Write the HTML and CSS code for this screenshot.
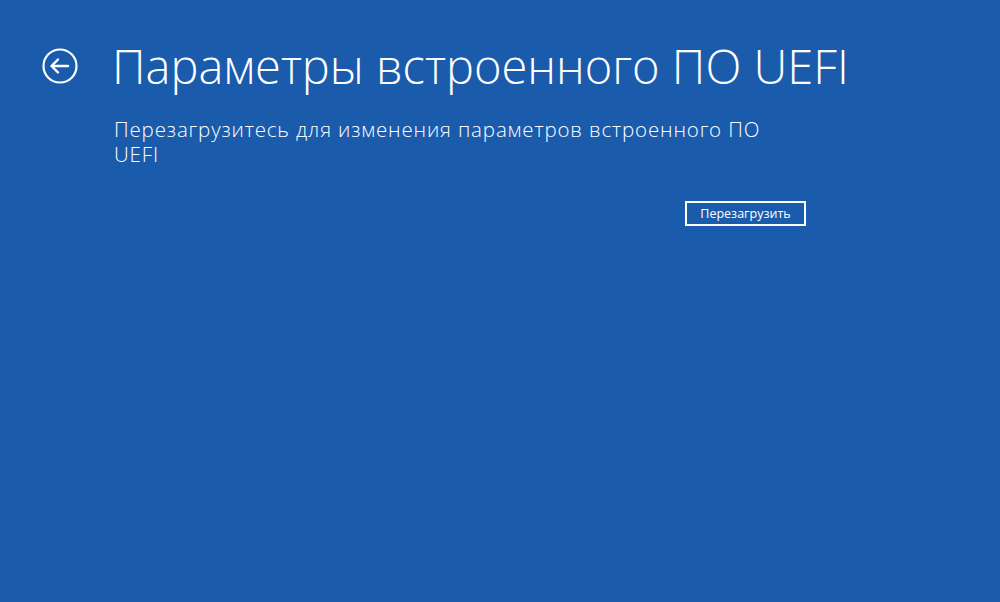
FILE: index.html
```html
<!DOCTYPE html>
<html lang="ru">
<head>
<meta charset="utf-8">
<link rel="stylesheet" href="styles.css">
</head>
<body>
<div class="page">
  <header class="head">
    <svg class="back" width="38" height="38" viewBox="0 0 38 38">
      <circle cx="19" cy="19" r="16.5" fill="none" stroke="#fff" stroke-width="2.2"/>
      <path d="M10.5 19 H27 M17 12.5 L10.5 19 L17 25.5" fill="none" stroke="#fff" stroke-width="2.4" stroke-linecap="round" stroke-linejoin="round"/>
    </svg>
    <h1 class="title">Параметры встроенного ПО UEFI</h1>
  </header>
  <main class="content">
    <p class="desc">Перезагрузитесь для изменения параметров встроенного ПО UEFI</p>
    <div class="actions">
      <button class="btn">Перезагрузить</button>
    </div>
  </main>
</div>
</body>
</html>
```
FILE: styles.css
```css
html, body {
  margin: 0;
  padding: 0;
  background: #1b5bac;
  width: 1000px;
  height: 602px;
  overflow: hidden;
  font-family: "Open Sans", "Noto Sans", sans-serif;
  color: #fff;
}
.head {
  display: flex;
  align-items: center;
  padding-top: 36px;
  padding-left: 41px;
  height: 60px;
}
.back {
  display: block;
  flex: none;
  margin-right: 33px;
}
.title {
  margin: 0;
  font-weight: 300;
  font-size: 47px;
  line-height: 60px;
  white-space: nowrap;
}
.content {
  padding-left: 114px;
  width: 692px;
  padding-top: 21px;
}
.desc {
  margin: 0;
  max-width: 670px;
  font-size: 20.5px;
  letter-spacing: 0.85px;
  line-height: 25px;
  font-weight: 300;
}
.actions {
  display: flex;
  justify-content: flex-end;
  margin-top: 34px;
}
.btn {
  width: 121px;
  height: 25px;
  background: transparent;
  border: 2px solid #fff;
  color: #fff;
  font-family: "Open Sans", "Noto Sans", sans-serif;
  font-size: 12.5px;
  padding: 0;
  line-height: 19px;
}
```
